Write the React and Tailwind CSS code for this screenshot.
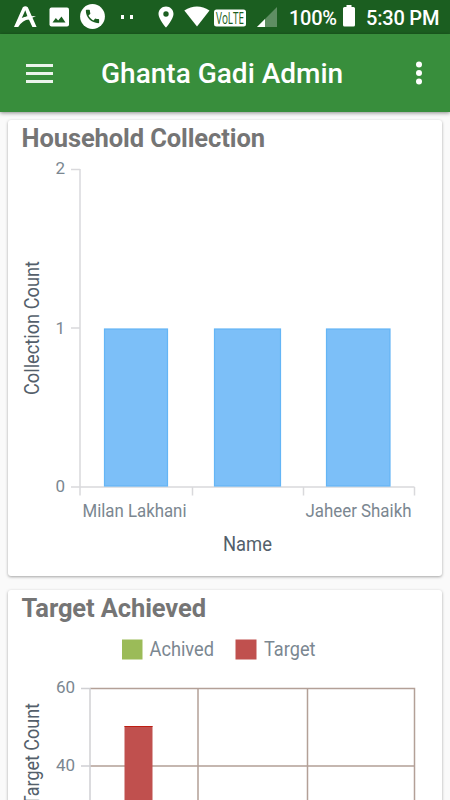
const households = [
    { name: 'Milan Lakhani', x: 104, width: 64 },
    { name: '', x: 214, width: 67 },
    { name: 'Jaheer Shaikh', x: 326, width: 64.5 },
];

const StatusBar = () => (
    <div className="flex h-[34px] items-center bg-[#1b5e20] text-white">
        <svg className="ml-3.5 shrink-0" width="23" height="22" viewBox="0 0 23 22" fill="currentColor">
            <path d="M8.8 1.2Q11.3-.6 13.8 1.2L22.6 21H18.4L14.9 13.5Q9 13.5 4.2 21H0ZM11.3 4.2L7.8 12Q10 10.5 13.5 10.4Z" />
            <path d="M12 10.4L22 10L14.5 13.6Z" />
        </svg>
        <svg className="ml-3 shrink-0" width="21" height="20" viewBox="0 0 21 20">
            <rect x=".5" y=".5" width="19.5" height="19" rx="2" fill="currentColor" />
            <path d="M3.5 15.5L6.8 11L9.2 13.5L12.5 9.5L16.5 15.5Z" fill="#1b5e20" />
        </svg>
        <svg className="-mt-px ml-2.5 shrink-0" width="25" height="25" viewBox="0 0 25 25">
            <circle cx="12.5" cy="12.5" r="12.4" fill="currentColor" />
            <path transform="translate(3.6 3.6) scale(.74)" d="M6.62 10.79c1.44 2.83 3.76 5.14 6.59 6.59l2.2-2.2c.27-.27.67-.36 1.02-.24 1.12.37 2.33.57 3.57.57.55 0 1 .45 1 1V20c0 .55-.45 1-1 1-9.39 0-17-7.61-17-17 0-.55.45-1 1-1h3.5c.55 0 1 .45 1 1 0 1.25.2 2.45.57 3.57.11.35.03.74-.25 1.02l-2.2 2.2z" fill="#1b5e20" />
        </svg>
        <div className="ml-4 flex gap-1.5">
            <i className="h-1 w-[3px] bg-white" />
            <i className="h-1 w-[3px] bg-white" />
        </div>
        <svg className="ml-[25px] shrink-0" width="16" height="22" viewBox="0 0 16 22" fill="currentColor" fillRule="evenodd">
            <path d="M8 .5C3.7.5.5 3.7.5 8 .5 13.3 8 21.5 8 21.5S15.5 13.3 15.5 8C15.5 3.7 12.3.5 8 .5ZM8 5.3A2.700 2.700 0 1 1 8 10.700A2.700 2.700 0 1 1 8 5.3Z" />
        </svg>
        <svg className="-mt-0.5 ml-2.5 shrink-0" width="26" height="21" viewBox="0 0 26 21" fill="currentColor">
            <path d="M.3 4.500Q13-3.500 25.500 4.500L13 20.500Z" />
        </svg>
        <svg className="ml-1 mt-px shrink-0 overflow-visible" width="32" height="18" viewBox="0 0 32 18">
            <rect y=".5" width="32" height="17" rx="2.500" fill="currentColor" />
            <text x="2" y="15" textLength="28" lengthAdjust="spacingAndGlyphs" className="fill-[#1b5e20] font-['Open_Sans',sans-serif] text-[16px]">VoLTE</text>
        </svg>
        <svg className="ml-[11px] shrink-0" width="20" height="20" viewBox="0 0 20 20" fill="currentColor">
            <path d="M20 0V20H0Z" opacity=".3" />
            <path d="M8 12V20H0Z" />
        </svg>
        <span className="ml-3 mt-0.5 w-[47px] whitespace-nowrap text-[20px] font-medium leading-none tracking-[-0.3px]">100%</span>
        <svg className="-mt-0.5 ml-[7px] shrink-0" width="12" height="22" viewBox="0 0 12 22" fill="currentColor">
            <path d="M3.5 0H8.5V2H10.5Q12 2 12 3.5V20Q12 21.5 10.5 21.5H1.5Q0 21.5 0 20V3.5Q0 2 1.5 2H3.5Z" />
        </svg>
        <span className="ml-[11px] mt-0.5 whitespace-nowrap text-[20px] font-medium leading-none tracking-[-0.2px]">5:30 PM</span>
    </div>
);

const AppBar = () => (
    <header className="relative flex h-[78px] items-center bg-[#388e3c] text-white shadow-[0_1px_4px_rgba(0,0,0,0.45)]">
        <div className="ml-[26px] flex w-[27px] flex-col gap-[5px]">
            <i className="h-[3px] bg-white/90" />
            <i className="h-[3px] bg-white/90" />
            <i className="h-[3px] bg-white/90" />
        </div>
        <h1 className="ml-12 mt-0.5 w-[242px] whitespace-nowrap text-[28px] font-medium leading-none">Ghanta Gadi Admin</h1>
        <svg className="ml-[73px]" width="6" height="24" viewBox="0 0 6 24" fill="currentColor">
            <circle cx="3" cy="3.5" r="3" />
            <circle cx="3" cy="12" r="3" />
            <circle cx="3" cy="20.5" r="3" />
        </svg>
    </header>
);

const ChartCard = ({ title, children }) => (
    <section className="mx-2 h-[456px] shrink-0 overflow-hidden rounded-[3px] bg-white shadow-[0_1px_3px_rgba(0,0,0,0.35)]">
        <h2 className="ml-[13.5px] mt-[3px] h-[33px] whitespace-nowrap text-[25.5px] font-bold leading-[30px] tracking-[-0.1px] text-[#757575]">{title}</h2>
        {children}
    </section>
);

const HouseholdChart = () => (
    <svg className="block" width="434" height="420" viewBox="8 156 434 420">
        <path d="M80 169V495.5M71 169.5H80M71 328H80M71 487H414.5M192.5 487V495.5M303.5 487V495.5M414.5 487V495.5" fill="none" stroke="#d9d9dc" strokeWidth="1.5" />
        {households.map((item) => (
            <rect key={item.x} x={item.x + 0.5} y="329" width={item.width - 1} height="157" fill="#7cbff8" stroke="#64b5f6" strokeWidth="1.2" />
        ))}
        <g className="fill-[#7b8791] text-[17px]">
            <text x="65" y="173.5" textAnchor="end">2</text>
            <text x="65" y="333.5" textAnchor="end">1</text>
            <text x="65" y="492" textAnchor="end">0</text>
            <text x="82.5" y="516.5" textLength="104" lengthAdjust="spacingAndGlyphs" className="text-[17.5px]">{households[0].name}</text>
            <text x="305.5" y="516.5" textLength="106" lengthAdjust="spacingAndGlyphs" className="text-[17.5px]">{households[2].name}</text>
        </g>
        <g className="fill-[#545f6b] text-[19.5px]">
            <text x="223" y="551" textLength="49" lengthAdjust="spacingAndGlyphs">Name</text>
            <text transform="translate(38.5 395) rotate(-90)" textLength="134" lengthAdjust="spacingAndGlyphs">Collection Count</text>
        </g>
    </svg>
);

const TargetChart = () => (
    <svg className="block" width="434" height="420" viewBox="8 626 434 420">
        <rect x="122" y="639.5" width="20.5" height="20" fill="#9bbb58" />
        <rect x="235.5" y="639.5" width="21" height="20" fill="#c0504e" />
        <g className="fill-[#7b8791] text-[19.5px]">
            <text x="149.5" y="656" textLength="64.5" lengthAdjust="spacingAndGlyphs">Achived</text>
            <text x="264" y="656" textLength="51.5" lengthAdjust="spacingAndGlyphs">Target</text>
        </g>
        <path d="M90 688.5H414.5V930M90 766H414.5M198 688.5V930M307.5 688.5V930" fill="none" stroke="#b3a097" strokeWidth="1.5" />
        <path d="M90 688V930M81 688.5H90M81 766H90" fill="none" stroke="#d0d0d3" strokeWidth="1.5" />
        <rect x="124.5" y="726" width="28" height="190" fill="#c0504e" />
        <path d="M124.5 726.5H152.5" stroke="#bd1e12" />
        <g className="fill-[#7b8791] text-[17px]">
            <text x="56" y="692.5" textLength="19">60</text>
            <text x="56" y="771" textLength="19">40</text>
        </g>
        <text transform="translate(38.5 806) rotate(-90)" textLength="103" lengthAdjust="spacingAndGlyphs" className="fill-[#545f6b] text-[19.5px]">Target Count</text>
    </svg>
);

export default function App() {
    return (
        <div className="h-[800px] w-[450px] overflow-hidden bg-[#fafafa] font-[Roboto,sans-serif]">
            <StatusBar />
            <AppBar />
            <main className="flex flex-col gap-3.5 pt-2">
                <ChartCard title="Household Collection">
                    <HouseholdChart />
                </ChartCard>
                <ChartCard title="Target Achieved">
                    <TargetChart />
                </ChartCard>
            </main>
        </div>
    );
}
